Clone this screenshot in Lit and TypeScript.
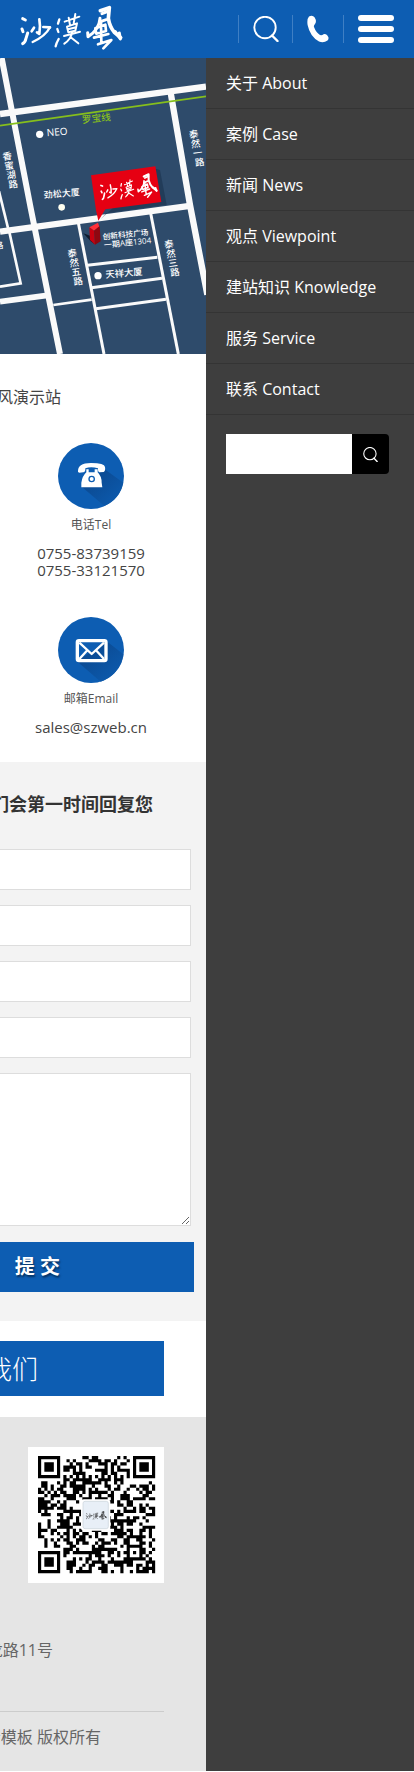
import { LitElement, html, css, svg } from "lit";
import { customElement } from "lit/decorators.js";

// Brush-stroke wordmark, drawn on a 310 x 142 field.
const brush = svg`
  <g fill="none" stroke="currentColor" stroke-linecap="round" stroke-linejoin="round">
    <path stroke-width="9" d="M8 41l8 4M6 72l3 8M8 116q8-4 10-16l5-16"/>
    <path stroke-width="8" d="M58 43q4 20 0 44l-7-5M42 68l-7 11M70 66l20 1"/>
    <path stroke-width="7" d="M90 67Q76 94 38 111"/>
    <path stroke-width="7" d="M118 43l-4 13M112 72l3 9M107 124q2-10 9-22"/>
    <path stroke-width="6" d="M134 50l44-15M146 38l4 22M166 27l-5 28M141 65l30-10-5 22-21 5zM144 73l24-6M132 93l48-13M157 80q-4 23-24 36M152 97l23 18"/>
    <path stroke-width="11" d="M241 17l27-9-3 32q4 26 18 42l19 16"/>
    <path stroke-width="9" d="M266 18l-20 8M286 80l15 22-3-18M240 40q-2 34-36 55l-1-12M241 50l18-6"/>
    <path stroke-width="8" d="M226 70l30-11 2 19-29 8zM243 50l1 60M222 98l43-11M234 118l40-13-24 25"/>
  </g>`;

const magnifier = svg`
  <svg viewBox="0 0 26 26" aria-hidden="true">
    <circle cx="12" cy="11.500" r="10.700" fill="none" stroke="currentColor" stroke-width="1.900"/>
    <path d="M19 19.500l5.500 5.500" stroke="currentColor" stroke-width="2.400" stroke-linecap="round"/>
  </svg>`;

const roads: Array<[string, number]> = [
  ["M0 168L618 86", 19],
  ["M5 0L92 450L180 888", 18],
  ["M512 104L570 441L622 710", 19],
  ["M0 521L575 443", 19],
  ["M-3 400L24 510", 8],
  ["M28 522L62 676L0 686", 8],
  ["M0 731L142 712", 17],
  ["M235 494L312 888", 9],
  ["M452 466L535 888", 9],
  ["M262 622L472 598", 9],
  ["M274 689L486 661", 9],
  ["M288 752L498 724", 9],
  ["M160 741L275 725", 8],
];

const streets: Array<[string, number, number]> = [
  ["香蜜湖路", 23, 295],
  ["泰然一路", 582, 229],
  ["泰然五路", 218, 586],
  ["泰然三路", 508, 559],
];

@customElement("site-map")
class SiteMap extends LitElement {
  static styles = css`
    :host { display: block; }
    .map { display: block; width: 100%; height: 296px; background: #2e4b6b; }
    .label { font-family: "Open Sans", "Noto Sans CJK SC", sans-serif; font-weight: 500; fill: #fff; }
    .line { fill: #86bf1c; }
    .mark { color: #fff; }
  `;
  render() {
    return html`
      <svg class="map" viewBox="0 0 618 888" preserveAspectRatio="xMaxYMid slice" role="img">
        ${roads.map(([d, w]) => svg`<path d=${d} fill="none" stroke="#fafafa" stroke-width=${w}/>`)}
        <path d="M0 203L618 115" stroke="#86bf1c" stroke-width="5"/>
        <circle cx="119" cy="229" r="11" fill="#fff"/>
        <circle cx="185" cy="448" r="10" fill="#fffff0"/>
        <circle cx="294" cy="653" r="11" fill="#fff"/>
        <text class="label" font-size="30" transform="translate(141 235) rotate(-5)">NEO</text>
        <text class="label line" font-size="29" transform="translate(247 196) rotate(-6)">罗宝线</text>
        <text class="label" font-size="27" transform="translate(132 421) rotate(-5)">劲松大厦</text>
        <text class="label" font-size="28" transform="translate(317 660) rotate(-5)">天祥大厦</text>
        <text class="label" font-size="23" transform="translate(309 545) rotate(-6)">创新科技广场</text>
        <text class="label" font-size="24" transform="translate(313 570) rotate(-6)">一期A座1304</text>
        <text class="label" font-size="26" transform="translate(-15 573) rotate(-6)">路</text>
        ${streets.map(([name, x, y]) =>
          [...name].map((ch, i) => svg`
            <text class="label" font-size="28" text-anchor="middle"
              transform="translate(${x + i * 6} ${y + 10 + i * 28}) rotate(-8)">${ch}</text>`))}
        <path d="M466 332l14 4 20 104-182 26-16 18z" fill="#142a44" opacity=".45"/>
        <path d="M273 352L466 325L484 432L316 454L295 488L288 457Z" fill="#e60012"/>
        <g class="mark" transform="translate(296 360) rotate(-6) scale(.56)">${brush}</g>
        <path d="M272 534l-22-8 22 24 12 9z" fill="#0d1c2e"/>
        <path d="M268 508l26-14 4 12-16 12z" fill="#ff3038"/>
        <path d="M268 508l14 10 3 42-15-14z" fill="#c8000f"/>
        <path d="M282 518l17-14 3 46-17 10z" fill="#8f0710"/>
      </svg>`;
  }
}

const SIZE = 37;

function moduleOn(x: number, y: number): boolean {
  const corners = [[0, 0], [SIZE - 7, 0], [0, SIZE - 7]];
  for (const [cx, cy] of corners) {
    const dx = x - cx;
    const dy = y - cy;
    if (dx >= -1 && dx <= 7 && dy >= -1 && dy <= 7) {
      const ring = Math.max(Math.abs(dx - 3), Math.abs(dy - 3));
      return ring === 3 || ring < 2;
    }
  }
  const ring = Math.max(Math.abs(x - 30), Math.abs(y - 30));
  if (ring <= 2) return ring !== 1;
  if (x === 6 || y === 6) return (x + y) % 2 === 0;
  let h = (x * 374761393 + y * 668265263) | 0;
  h = Math.imul(h ^ (h >>> 13), 1274126177);
  return ((h ^ (h >>> 16)) & 127) < 66;
}

function qrPath(): string {
  let d = "";
  for (let y = 0; y < SIZE; y++) {
    for (let x = 0; x < SIZE; x++) {
      if (moduleOn(x, y)) d += `M${x} ${y}h1v1h-1z`;
    }
  }
  return d;
}

@customElement("qr-code")
class QrCode extends LitElement {
  static styles = css`
    :host { display: block; }
    .code { display: block; width: 136px; height: 136px; background: #fff; }
    .mark { color: #222; }
  `;
  render() {
    return html`
      <svg class="code" viewBox="0 0 408 408" role="img">
        <path transform="translate(30 27) scale(9.500)" d=${qrPath()} fill="#000"/>
        <rect x="159" y="157" width="88" height="94" rx="9" fill="#fff"/>
        <rect x="165" y="163" width="76" height="82" rx="6" fill="#e8eff7" stroke="#c9d1da" stroke-width="2"/>
        <g class="mark" transform="translate(174 192) scale(.2)">${brush}</g>
      </svg>`;
  }
}

const menu = ["关于 About", "案例 Case", "新闻 News", "观点 Viewpoint", "建站知识 Knowledge", "服务 Service", "联系 Contact"];

@customElement("app-root")
class AppRoot extends LitElement {
  static styles = css`
    :host {
      display: block;
      font-family: "Open Sans", "Noto Sans CJK SC", sans-serif;
      font-size: 16px;
      line-height: 24px;
      color: #444;
    }
    * { box-sizing: border-box; }
    a { color: inherit; text-decoration: none; }
    button { border: 0; padding: 0; margin: 0; font: inherit; color: #fff; background: none; }
    .bar {
      display: flex; align-items: center; justify-content: space-between;
      height: 58px; padding: 0 20px; background: #0d5db2; color: #fff;
    }
    .logo svg { display: block; width: 104px; height: 48px; }
    .tools { display: flex; align-items: center; }
    .tool {
      display: flex; align-items: center; justify-content: center;
      width: 54px; height: 28px; border-left: 1px solid #3f7fc4;
    }
    .tool svg { width: 26px; height: 26px; }
    .call { width: 51px; }
    .call svg { height: 28px; }
    .toggle { display: flex; flex-direction: column; gap: 5px; width: 51px; padding-left: 14px; border-left: 1px solid #3f7fc4; }
    .toggle span { height: 6px; border-radius: 3px; background: #fff; }
    .body { display: grid; grid-template-columns: minmax(0, 1fr) 208px; }
    .page { overflow: hidden; background: #fff; }
    .drawer { background: #3e3e3e; color: #fff; }
    .item { display: block; padding: 13px 20px; border-bottom: 1px solid #343434; }
    .search { display: flex; padding: 19px 25px 0 20px; }
    .query { flex: 1; min-width: 0; height: 40px; border: 0; border-radius: 0; background: #fff; padding: 0 8px; font: inherit; }
    .go { display: flex; align-items: center; justify-content: center; width: 37px; height: 40px; background: #000; border-radius: 0 4px 4px 0; }
    .go svg { width: 15px; height: 15px; }
    .tail { display: flex; justify-content: flex-end; margin: 0; white-space: nowrap; }
    .name { padding: 31px 145px 0 0; }
    .contact { display: flex; flex-direction: column; align-items: center; padding: 34px 24px 0 0; }
    .mail { padding-top: 38px; }
    .badge { display: block; width: 66px; height: 66px; }
    .kind { padding: 4px 0 8px; font-size: 12px; color: #555; }
    .value { font-size: 15px; line-height: 17px; }
    .enquiry { margin-top: 26px; padding: 30px 15px 29px 0; background: #f3f3f3; }
    .lead { padding: 0 38px 33px 0; font-size: 18px; font-weight: 700; color: #333; }
    .field {
      display: block; width: 100%; height: 41px; margin: 0 0 15px; padding: 0 10px;
      border: 1px solid #ddd; border-left: 0; border-radius: 0; background: #fff; font: inherit;
    }
    .area { height: 153px; margin-bottom: 16px; }
    .send {
      display: flex; align-items: center; justify-content: flex-end; width: calc(100% + 3px); height: 50px;
      padding-right: 134px; background: #0d5db2; font-size: 20px; font-weight: 700;
      text-shadow: 1px 2px 2px #06305f;
    }
    .follow { padding: 20px 42px 21px 0; }
    .about { display: flex; align-items: center; justify-content: flex-end; height: 55px; padding-right: 126px; background: #0d5db2; color: #fff; font-size: 26px; font-weight: 300; white-space: nowrap; }
    .foot { padding: 30px 42px 22px 0; background: #e5e5e5; color: #666; }
    .code { display: flex; justify-content: flex-end; }
    .address { padding: 55px 111px 49px 0; }
    .legal { padding: 13px 63px 0 0; border-top: 1px solid #ccc; }
  `;
  render() {
    return html`
      <header class="bar">
        <a class="logo" href="#" aria-label="沙漠风">
          <svg viewBox="0 0 312 144">${brush}</svg>
        </a>
        <div class="tools">
          <button class="tool" aria-label="Search">${magnifier}</button>
          <a class="tool call" href="tel:0755-83739159" aria-label="Tel">
            <svg viewBox="0 0 26 28"><path fill="currentColor" d="M4 1.500Q7.500-.5 9.700 2.500Q12 6.500 10 9Q8.500 10.500 9 12Q11 17.500 15 20Q17 20.500 18.500 19.300Q20 18.500 22 20L23.300 22Q24 24 22.500 25.500Q18.500 28.500 14 26.500Q5 21.500 2.600 10Q1.700 4 4 1.500Z"/></svg>
          </a>
          <button class="toggle" aria-label="Menu"><span></span><span></span><span></span></button>
        </div>
      </header>
      <div class="body">
        <main class="page">
          <site-map></site-map>
          <p class="tail name">风演示站</p>
          <section class="contact">
            <svg class="badge" viewBox="0 0 198 198" aria-hidden="true">
              <defs>
                <linearGradient id="shade" x1="0" y1="0" x2="1" y2="1">
                  <stop offset="0" stop-color="#0a4488"/>
                  <stop offset="1" stop-color="#0d5db2"/>
                </linearGradient>
              </defs>
              <circle cx="99" cy="99" r="99" fill="#0d5db2"/>
              <path d="M139 78L196 119A99 99 0 0 1 139 189L72 132Z" fill="url(#shade)"/>
              <path fill="#fff" d="M60 87Q58 60 99 60T141 72Q143 84 137 87L125 88Q119 87 120 76Q99 70 82 76Q83 87 76 88L64 89Z"/>
              <path fill="#fff" d="M85 79h7v9h18v-9h9v9q12 12 12 31l2 14H70v-14q3-20 15-31z"/>
              <circle cx="101" cy="108" r="8" fill="none" stroke="#0d5db2" stroke-width="4"/>
            </svg>
            <span class="kind">电话Tel</span>
            <a class="value" href="tel:0755-83739159">0755-83739159</a>
            <a class="value" href="tel:0755-33121570">0755-33121570</a>
          </section>
          <section class="contact mail">
            <svg class="badge" viewBox="0 0 198 198" aria-hidden="true">
              <circle cx="99" cy="99" r="99" fill="#0d5db2"/>
              <path d="M148 74L196 112A99 99 0 0 1 128 194L56 132Z" fill="url(#shade)"/>
              <g fill="none" stroke="#fff" stroke-linejoin="round">
                <rect x="58" y="71" width="86" height="60" rx="5" stroke-width="10"/>
                <path stroke-width="7" d="M64 77L101 111L138 77M64 126L88 100M138 126L114 100"/>
              </g>
            </svg>
            <span class="kind">邮箱Email</span>
            <a class="value" href="mailto:sales@szweb.cn">sales@szweb.cn</a>
          </section>
          <form class="enquiry" @submit=${(e: Event) => e.preventDefault()}>
            <h2 class="tail lead">们会第一时间回复您</h2>
            ${["姓名", "电话", "邮箱", "地址"].map((n) => html`<input class="field" type="text" aria-label=${n}>`)}
            <textarea class="field area" aria-label="留言"></textarea>
            <button class="send">提 交</button>
          </form>
          <div class="follow"><a class="about" href="#">我们</a></div>
          <footer class="foot">
            <div class="code"><qr-code></qr-code></div>
            <p class="tail address">龙路11号</p>
            <p class="tail legal">音模板 版权所有</p>
          </footer>
        </main>
        <aside class="drawer">
          <nav>${menu.map((m) => html`<a class="item" href="#">${m}</a>`)}</nav>
          <form class="search" @submit=${(e: Event) => e.preventDefault()}>
            <input class="query" type="text" aria-label="Search">
            <button class="go" aria-label="Search">${magnifier}</button>
          </form>
        </aside>
      </div>`;
  }
}
